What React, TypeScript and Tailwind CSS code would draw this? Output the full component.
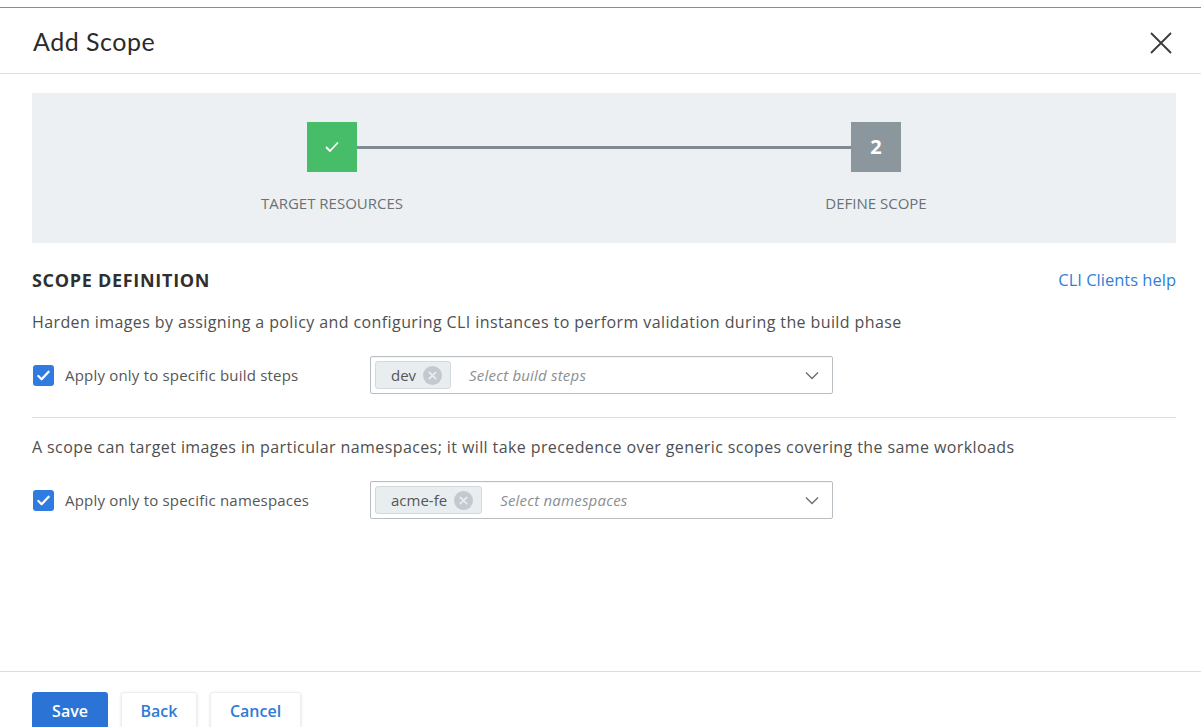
import React, { useState } from 'react';

function Chip({ label }: { label: string }) {
  return (
    <span className="flex items-center gap-[7px] h-[28px] pl-[15px] pr-[8px] rounded-[3px] bg-[#e8edf0] border border-[#d3dade] text-[15px] leading-[20px] text-[#565656]">
      {label}
      <svg width="19" height="19" viewBox="0 0 18 18">
        <circle cx="9" cy="9" r="9" fill="#c3cacf" />
        <path d="M6 6l6 6M12 6l-6 6" stroke="#e8edf0" strokeWidth="1.6" strokeLinecap="round" />
      </svg>
    </span>
  );
}

function ScopeRow({ label, chip, placeholder }: { label: string; chip: string; placeholder: string }) {
  const [checked, setChecked] = useState(true);
  return (
    <div className="flex items-center">
      <button
        onClick={() => setChecked(!checked)}
        className={`ml-[1px] w-[21px] h-[21px] rounded-[3px] flex items-center justify-center ${checked ? 'bg-[#2f7be0]' : 'border border-gray-400 bg-white'}`}
      >
        {checked && (
          <svg width="15" height="15" viewBox="0 0 16 16">
            <path d="M2.5 8.5l3.5 3.5 7.5-8" fill="none" stroke="#fff" strokeWidth="2.4" strokeLinecap="round" strokeLinejoin="round" />
          </svg>
        )}
      </button>
      <span className="ml-[11px] w-[305px] text-[15px] tracking-[0.2px] text-[#565656]">{label}</span>
      <div className="w-[463px] h-[38px] border border-[#b9bec2] rounded-[2px] flex items-center pl-[4px] pr-[12px] shadow-[inset_0_1px_1px_rgba(0,0,0,0.04)]">
        <Chip label={chip} />
        <span className="ml-[18px] flex-1 italic text-[15px] tracking-[0.2px] text-[#8a8f93]">{placeholder}</span>
        <svg width="16" height="16" viewBox="0 0 16 16">
          <path d="M2 5.5l6 6 6-6" fill="none" stroke="#6b7075" strokeWidth="1.4" />
        </svg>
      </div>
    </div>
  );
}

export default function App() {
  return (
    <div className="w-[1201px] h-[727px] bg-white overflow-hidden font-['Open_Sans',sans-serif]">
      <div className="h-[7px]" />
      <div className="border-t border-[#8c8c8c]" />

      {/* header */}
      <div className="h-[66px] flex items-center justify-between pl-[33px] pr-[28px] border-b border-[#dfe2e4]">
        <h1 className="text-[25px] text-[#2b2b2b] font-['Lato',sans-serif] tracking-[0.5px] pt-[3px]">Add Scope</h1>
        <svg width="24" height="24" viewBox="0 0 24 24" className="mt-[4px]">
          <path d="M2 2l20 20M22 2L2 22" stroke="#3a3a3a" strokeWidth="1.8" />
        </svg>
      </div>

      <div className="pl-[32px] pr-[25px] pt-[19px]">
        {/* stepper */}
        <div className="h-[150px] bg-[#ecf0f2] pt-[29px]">
          <div className="flex items-center px-[275px]">
            <div className="w-[50px] h-[50px] bg-[#47bd69] flex items-center justify-center">
              <svg width="16" height="16" viewBox="0 0 16 16">
                <path d="M2.5 8.5l3.5 3.5 7.5-8" fill="none" stroke="#fff" strokeWidth="1.8" strokeLinecap="round" strokeLinejoin="round" />
              </svg>
            </div>
            <div className="flex-1 h-[3px] bg-[#7f8c93]" />
            <div className="w-[50px] h-[50px] bg-[#8c979d] flex items-center justify-center text-white text-[20px] font-bold">2</div>
          </div>
          <div className="flex justify-between px-[200px] mt-[19px] text-[15px] leading-[24px] text-[#6b7176] uppercase">
            <span className="w-[200px] text-center">Target Resources</span>
            <span className="w-[200px] text-center">Define Scope</span>
          </div>
        </div>

        {/* scope definition */}
        <div className="flex items-center justify-between mt-[25px] h-[24px]">
          <h2 className="text-[18px] leading-[24px] font-bold tracking-[0.7px] text-[#2f2f2f]">SCOPE DEFINITION</h2>
          <a className="text-[16.5px] leading-[24px] text-[#2f80d8]">CLI Clients help</a>
        </div>
        <p className="mt-[18px] text-[16px] leading-[24px] tracking-[0.4px] text-[#4f4f4f]">
          Harden images by assigning a policy and configuring CLI instances to perform validation during the build phase
        </p>
        <div className="mt-[22px]">
          <ScopeRow label="Apply only to specific build steps" chip="dev" placeholder="Select build steps" />
        </div>

        <div className="mt-[23px] border-t border-[#d9dde0]" />

        <p className="mt-[17px] text-[16px] leading-[24px] tracking-[0.4px] text-[#4f4f4f]">
          A scope can target images in particular namespaces; it will take precedence over generic scopes covering the same workloads
        </p>
        <div className="mt-[22px]">
          <ScopeRow label="Apply only to specific namespaces" chip="acme-fe" placeholder="Select namespaces" />
        </div>
      </div>

      {/* footer */}
      <div className="mt-[152px] border-t border-[#dadee1]" />
      <div className="flex gap-[13px] px-[32px] pt-[20px]">
        <button className="w-[76px] h-[40px] rounded-[3px] bg-[#2b74d6] text-white text-[16px] font-semibold pb-[2px]">Save</button>
        <button className="w-[76px] h-[40px] rounded-[3px] bg-white border border-[#eceeef] shadow-[0_1px_3px_rgba(0,0,0,0.12)] text-[#2f7bd6] text-[16px] font-semibold pb-[2px]">Back</button>
        <button className="w-[91px] h-[40px] rounded-[3px] bg-white border border-[#eceeef] shadow-[0_1px_3px_rgba(0,0,0,0.12)] text-[#2f7bd6] text-[16px] font-semibold pb-[2px]">Cancel</button>
      </div>
    </div>
  );
}
